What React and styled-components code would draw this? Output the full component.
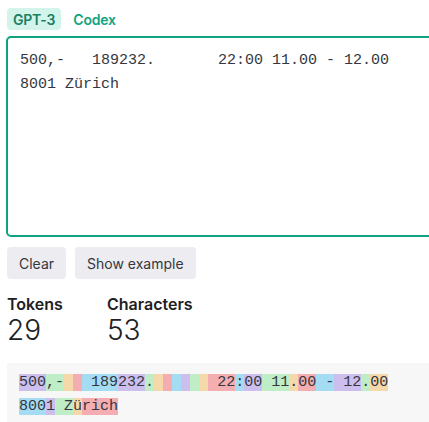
import React from "react";
import styled, { createGlobalStyle } from "styled-components";

const GlobalStyle = createGlobalStyle`
  body {
    margin: 0;
    overflow: hidden;
    background: #fff;
    font-family: Inter, "Liberation Sans", sans-serif;
    color: #353740;
  }
`;

const TEXT =
  "500,-   189232.       22:00 11.00 - 12.00\n8001 Zürich";

const TOKENS = [
  "500", ",-", " ", " ", " 189", "232", ".", " ", " ", " ", " ", " ", " ",
  " 22", ":", "00", " 11", ".", "00", " -", " 12", ".", "00", "\n",
  "800", "1", " Z", "ü", "rich",
];

const TOKEN_COLORS = [
  "rgba(107, 64, 216, 0.3)",
  "rgba(104, 222, 122, 0.4)",
  "rgba(244, 172, 54, 0.4)",
  "rgba(239, 65, 70, 0.4)",
  "rgba(39, 181, 234, 0.4)",
];

export default function App() {
  return (
    <>
      <GlobalStyle />
      <Page>
        <Tabs>
          <Tab active>GPT-3</Tab>
          <Tab>Codex</Tab>
        </Tabs>
        <Input defaultValue={TEXT} spellCheck={false} />
        <Buttons>
          <Button>Clear</Button>
          <Button>Show example</Button>
        </Buttons>
        <Stats>
          <Stat>
            <StatLabel>Tokens</StatLabel>
            <StatValue>29</StatValue>
          </Stat>
          <Stat>
            <StatLabel>Characters</StatLabel>
            <StatValue>53</StatValue>
          </Stat>
        </Stats>
        <TokenBox>
          {TOKENS.map((token, index) => (
            <Token key={index} color={TOKEN_COLORS[index % TOKEN_COLORS.length]}>
              {token}
            </Token>
          ))}
        </TokenBox>
      </Page>
    </>
  );
}

const Page = styled.div`
  width: 620px;
  padding: 8px 0 0 7px;
  display: flex;
  flex-direction: column;
`;

const Tabs = styled.div`
  display: flex;
  gap: 6px;
  height: 22px;
`;

const Tab = styled.div`
  display: flex;
  align-items: center;
  padding: 0 6px;
  border-radius: 4px;
  font-size: 14px;
  font-weight: 600;
  letter-spacing: -0.2px;
  color: ${(p) => (p.active ? "#1a7f64" : "#10a37f")};
  background: ${(p) => (p.active ? "#d2f4ea" : "transparent")};
`;

const Input = styled.textarea`
  box-sizing: border-box;
  margin: 6px 0 0 -1px;
  width: 600px;
  height: 201px;
  padding: 11px 12px;
  border: 2px solid #10a37f;
  border-radius: 5px;
  outline: none;
  resize: none;
  font-family: "Liberation Mono", "DejaVu Sans Mono", monospace;
  font-size: 15px;
  line-height: 24px;
  color: #353740;
  white-space: pre;
  overflow: hidden;
`;

const Buttons = styled.div`
  display: flex;
  gap: 9px;
  margin-top: 10px;
`;

const Button = styled.button`
  height: 32px;
  padding: 0 12px;
  border: none;
  border-radius: 4px;
  background: #ececf1;
  font-family: Inter, "Liberation Sans", sans-serif;
  font-size: 14px;
  color: #353740;
`;

const Stats = styled.div`
  display: flex;
  margin-top: 15px;
`;

const Stat = styled.div`
  display: flex;
  flex-direction: column;
  min-width: 100px;
`;

const StatLabel = styled.div`
  font-size: 16px;
  font-weight: 600;
  line-height: 20px;
  color: #202123;
`;

const StatValue = styled.div`
  font-size: 28px;
  font-weight: 300;
  line-height: 32px;
  color: #202123;
`;

const TokenBox = styled.div`
  margin-top: 17px;
  padding: 8px 12px 20px;
  background: #f7f7f8;
  font-family: "Liberation Mono", "DejaVu Sans Mono", monospace;
  font-size: 15px;
  line-height: 24px;
  white-space: pre;
  color: #353740;
`;

const Token = styled.span`
  background: ${(p) => p.color};
`;
